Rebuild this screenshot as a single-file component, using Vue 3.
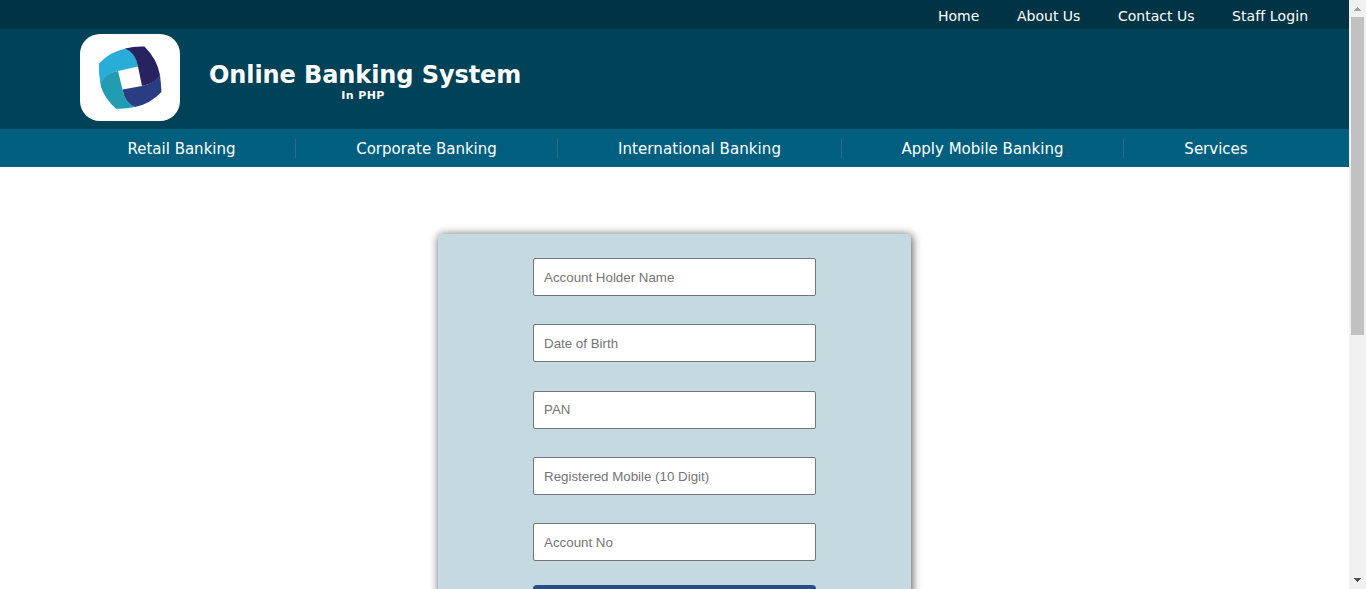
<script setup>
const topLinks = [
  { label: 'Home', cls: 'home' },
  { label: 'About Us', cls: 'about' },
  { label: 'Contact Us', cls: 'contact' },
  { label: 'Staff Login', cls: 'staff' },
]
const services = [
  { label: 'Retail Banking', cls: 'retail' },
  { label: 'Corporate Banking', cls: 'corporate' },
  { label: 'International Banking', cls: 'international' },
  { label: 'Apply Mobile Banking', cls: 'mobile' },
  { label: 'Services', cls: 'services' },
]
const fields = ['Account Holder Name', 'Date of Birth', 'PAN', 'Registered Mobile (10 Digit)', 'Account No']
</script>

<template>
  <div class="window">
    <div class="page">
      <nav class="topbar">
        <a v-for="l in topLinks" :key="l.label" :class="l.cls">{{ l.label }}</a>
      </nav>
      <header class="header">
        <div class="logo">
          <svg width="100" height="87" viewBox="0 0 100 87">
            <path fill="#27add8" d="M19 29.500Q31 17 46 14.500Q55 18 58 32.500L38 37Q27 38 20.500 50Q18.500 40 19 29.500Z" />
            <path fill="#28235f" d="M45 14.500Q55 12 64.500 12.500Q77 25 80 41Q77 49 62 52L58 32.500Q55 18 45 14.500Z" />
            <path fill="#2a3d83" d="M80 41Q81 49 81.500 58Q70 70 55 73Q45 70 42.500 55.500L62 52Q76 49 80 41Z" />
            <path fill="#219cb0" d="M38 37L42.500 55.500Q45 69 55 73Q46 75 36 74.700Q25 65 21 53L20.500 49Q27 38 38 37Z" />
          </svg>
        </div>
        <div class="brand">
          <h1>Online Banking System</h1>
          <p>In PHP</p>
        </div>
      </header>
      <nav class="menu">
        <a v-for="s in services" :key="s.label" :class="s.cls"><span>{{ s.label }}</span></a>
      </nav>
      <main class="content">
        <form class="card" @submit.prevent>
          <input v-for="f in fields" :key="f" type="text" :placeholder="f" />
          <button type="submit" aria-label="Submit"></button>
        </form>
      </main>
    </div>
    <div class="scrollbar">
      <svg width="17" height="17" viewBox="0 0 17 17" shape-rendering="crispEdges">
        <path fill="#a3a3a3" d="M8 7h1v1h1v1h1v1h1v1H5v-1h1V9h1V8h1z" />
      </svg>
      <div class="track"><div class="thumb"></div></div>
      <svg width="17" height="17" viewBox="0 0 17 17" shape-rendering="crispEdges">
        <path fill="#505050" d="M5 6h7v1h-1v1h-1v1H9v1H8V9H7V8H6V7H5z" />
      </svg>
    </div>
  </div>
</template>

<style>
body { margin: 0; overflow: hidden; background: #fff; }
</style>

<style scoped>
* { box-sizing: border-box; }
.window { display: flex; width: 1366px; height: 589px; overflow: hidden; font-family: Verdana, "DejaVu Sans", sans-serif; }
.page { width: 1349px; height: 589px; overflow: hidden; }
.topbar { height: 29px; background: #003445; display: flex; justify-content: flex-end; gap: 37px; padding-right: 40px; color: #fff; font-size: 14px; line-height: 32px; }
.topbar a { white-space: nowrap; }
.home { width: 42px; }
.about { width: 64px; }
.contact { width: 77px; }
.staff { width: 77px; letter-spacing: .1px; }
.header { height: 100px; background: #004257; display: flex; padding: 5px 0 0 80px; color: #fff; }
.logo { width: 100px; height: 87px; background: #fff; border-radius: 20px; overflow: hidden; }
.logo svg { display: block; }
.brand { margin: 26px 0 0 29px; width: 312px; text-align: center; white-space: nowrap; }
h1 { margin: 0; font-size: 24px; line-height: 30px; font-weight: 700; letter-spacing: -.09px; }
.brand p { margin: 0; padding-right: 4px; font-size: 11px; line-height: 12px; font-weight: 700; letter-spacing: .4px; }
.menu { height: 38px; background: #005f7e; display: flex; align-items: center; padding-left: 67px; color: #fff; font-size: 15px; }
.menu a { height: 19px; line-height: 20px; border-right: 1px solid #34688a; text-align: center; white-space: nowrap; }
.menu .retail { width: 229px; padding-left: 1px; }
.corporate { width: 262px; }
.international { width: 284px; letter-spacing: .08px; }
.mobile { width: 282px; }
.menu .services { width: 184px; border-right: 0; }
.content { padding-top: 67px; }
.card { width: 473px; height: 560px; margin-left: 438px; padding-top: 24px; display: flex; flex-direction: column; align-items: center; background: #c5d9e1; border-radius: 4px; box-shadow: 1px 1px 10px rgba(0, 0, 0, .7); }
input { width: 283px; height: 38px; margin: 0 0 28.35px; padding: 0 10px; border: 1px solid #767676; border-radius: 2px; background: #fff; font: 13.333px "Liberation Sans", Arial, sans-serif; flex: none; }
input::placeholder { color: #757575; opacity: 1; }
button { width: 283px; height: 40px; margin-top: -4.5px; border: 0; border-radius: 4px; background: #284e89; flex: none; }
.scrollbar { width: 17px; height: 589px; background: #f1f1f1; display: flex; flex-direction: column; }
.scrollbar svg { display: block; flex: none; }
.track { flex: 1; padding: 0 2px; }
.thumb { width: 13px; height: 318px; background: #c1c1c1; }
</style>
